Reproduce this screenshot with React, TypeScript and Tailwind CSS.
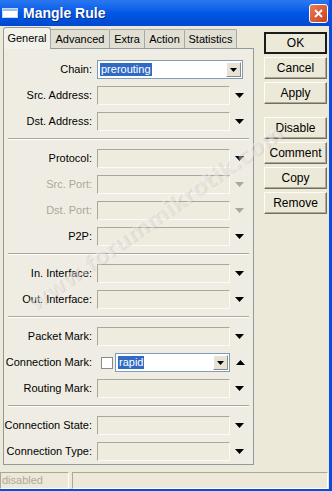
import type { ReactNode } from "react";

const font = "font-['Liberation_Sans',Arial,sans-serif]";

function Tri({ up, dim }: { up?: boolean; dim?: boolean }) {
  return (
    <svg width="9" height="5" viewBox="0 0 9 5">
      <polygon
        points={up ? "0,5 9,5 4.5,0" : "0,0 9,0 4.5,5"}
        fill={dim ? "#aca899" : "#000"}
      />
    </svg>
  );
}

function DropBtn() {
  return (
    <div className="flex h-[15px] w-[15px] items-center justify-center border border-t-white border-l-white border-r-[#8e8c82] border-b-[#8e8c82] bg-[#e6e3d6]">
      <svg width="7" height="4" viewBox="0 0 7 4">
        <polygon points="0,0 7,0 3.5,4" fill="#000" />
      </svg>
    </div>
  );
}

function Field() {
  return (
    <div className="h-[19px] w-[133px] border border-t-[#aca899] border-l-[#aca899] border-r-[#fbfaf5] border-b-[#fbfaf5] bg-[#edecdf]" />
  );
}

function Row({ label, dim, children }: { label: string; dim?: boolean; children?: ReactNode }) {
  return (
    <div className="flex h-[19px] items-center">
      <div className={`w-[88px] text-right text-[11px] leading-none ${dim ? "text-[#aca899]" : "text-black"}`}>{label}</div>
      <div className="ml-[5px] flex items-center">
        {children ?? (
          <>
            <Field />
            <div className="flex w-[18px] justify-center">
              <Tri dim={dim} />
            </div>
          </>
        )}
      </div>
    </div>
  );
}

function Sep() {
  return <div className="mx-[4px] mt-[7px] mb-[9px] h-[2px] border-t border-b border-t-[#aca899] border-b-white" />;
}

function Group({ children }: { children: ReactNode }) {
  return <div className="flex flex-col gap-[7px]">{children}</div>;
}

function Btn({ label, def }: { label: string; def?: boolean }) {
  return (
    <div
      className={`flex h-[22px] w-[63px] items-center justify-center bg-[#ece9d8] text-[12px] text-black ${
        def ? "border-2 border-[#1a1a1a]" : "border border-t-[#fcfcf8] border-l-[#fcfcf8] border-r-[#716f64] border-b-[#716f64] shadow-[inset_-1px_-1px_0_#aca899]"
      }`}
    >
      {label}
    </div>
  );
}

const tabs = ["General", "Advanced", "Extra", "Action", "Statistics"];
const tabW = [48, 60, 36, 41, 53];

export default function App() {
  return (
    <div className={`relative h-[491px] w-[332px] overflow-hidden border-r-[3px] border-b-2 border-[#0a4be0] bg-[#ece9d8] ${font}`}>
      {/* title bar */}
      <div className="flex h-[26px] items-center bg-linear-to-b from-[#2a78f0] via-[#0058e6] to-[#0048cf]">
        <div className="ml-[2px] flex h-[10px] w-[16px] flex-col border border-[#c7d8f5] bg-white">
          <div className="h-[2px] bg-[#9bbcf0]" />
        </div>
        <div className="ml-[5px] text-[14px] font-bold text-white [text-shadow:1px_1px_0_#0a2e8a]">Mangle Rule</div>
        <div className="ml-auto mr-[1px] flex h-[19px] w-[19px] items-center justify-center rounded-[3px] border border-white bg-linear-to-br from-[#ec7a55] to-[#c8401c]">
          <svg width="9" height="9" viewBox="0 0 9 9">
            <path d="M1 1 L8 8 M8 1 L1 8" stroke="#fff" strokeWidth="1.8" />
          </svg>
        </div>
      </div>

      {/* body */}
      <div className="flex">
        <div className="ml-[3px] w-[251px] pt-[1px]">
          <div className="relative z-10 flex h-[22px] items-end text-[11px]">
            {tabs.map((t, i) =>
              i === 0 ? (
                <div
                  key={t}
                  style={{ width: tabW[i] }}
                  className="flex h-[22px] items-center justify-center rounded-t-[3px] border border-b-0 border-[#919b9c] bg-[#f3f2ea] pb-[1px]"
                >
                  {t}
                </div>
              ) : (
                <div
                  key={t}
                  style={{ width: tabW[i] }}
                  className="mb-[1px] flex h-[19px] items-center justify-center rounded-t-[2px] border border-b-0 border-[#a4a9aa] bg-[#e1dfd3] -ml-px first:ml-0"
                >
                  {t}
                </div>
              ),
            )}
          </div>
          <div className="-mt-px h-[417px] border border-[#919b9c] bg-[#efede3] pt-[11px]">
            <Group>
              <Row label="Chain:">
                <div className="flex h-[19px] w-[146px] items-center border border-[#7f9db9] bg-white pl-[2px] pr-[1px]">
                  <span className="bg-[#316ac5] px-[1px] text-[11px] leading-[13px] text-white">prerouting</span>
                  <div className="ml-auto">
                    <DropBtn />
                  </div>
                </div>
              </Row>
              <Row label="Src. Address:" />
              <Row label="Dst. Address:" />
            </Group>
            <Sep />
            <Group>
              <Row label="Protocol:" />
              <Row label="Src. Port:" dim />
              <Row label="Dst. Port:" dim />
              <Row label="P2P:" />
            </Group>
            <Sep />
            <Group>
              <Row label="In. Interface:" />
              <Row label="Out. Interface:" />
            </Group>
            <Sep />
            <Group>
              <Row label="Packet Mark:" />
              <Row label="Connection Mark:">
                <div className="ml-[4px] h-[12px] w-[12px] border border-[#8a8a8a] bg-white" />
                <div className="ml-[2px] flex h-[19px] w-[115px] items-center border border-[#7f9db9] bg-white pl-[2px] pr-[1px]">
                  <span className="bg-[#316ac5] px-[1px] text-[11px] leading-[13px] text-white">rapid</span>
                  <div className="ml-auto">
                    <DropBtn />
                  </div>
                </div>
                <div className="flex w-[20px] justify-center">
                  <Tri up />
                </div>
              </Row>
              <Row label="Routing Mark:" />
            </Group>
            <Sep />
            <Group>
              <Row label="Connection State:" />
              <Row label="Connection Type:" />
            </Group>
          </div>
        </div>

        <div className="ml-[10px] mt-[6px] flex flex-col gap-[3px]">
          <Btn label="OK" def />
          <Btn label="Cancel" />
          <Btn label="Apply" />
          <div className="h-[7px]" />
          <Btn label="Disable" />
          <Btn label="Comment" />
          <Btn label="Copy" />
          <Btn label="Remove" />
        </div>
      </div>

      {/* status bar */}
      <div className="mt-[7px] flex h-[17px] gap-[3px]">
        <div className="flex w-[69px] items-center border border-t-[#aca899] border-l-[#aca899] border-r-white border-b-white pl-[1px] text-[11px] text-[#aca899]">
          disabled
        </div>
        <div className="w-[256px] border border-t-[#aca899] border-l-[#aca899] border-r-white border-b-white" />
      </div>

      {/* watermark */}
      <div className="pointer-events-none absolute left-[155px] top-[218px] -translate-x-1/2 -translate-y-1/2 -rotate-[35deg] whitespace-nowrap font-['DejaVu_Sans',sans-serif] text-[22px] font-bold text-white/40 [text-shadow:1px_1px_1px_rgba(140,120,120,0.2)]">
        www.forummikrotik.com
      </div>
    </div>
  );
}
